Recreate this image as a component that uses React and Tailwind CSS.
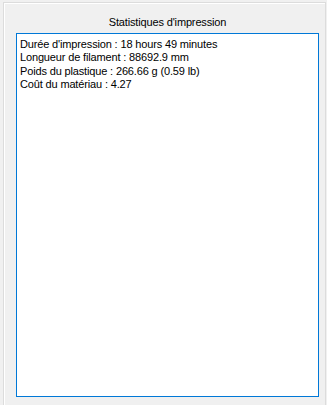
import React from "react";

const lines = [
  "Durée d'impression : 18 hours 49 minutes",
  "Longueur de filament : 88692.9 mm",
  "Poids du plastique : 266.66 g (0.59 lb)",
  "Coût du matériau : 4.27",
];

export default function App() {
  return (
    <div
      className="w-[327px] h-[405px] bg-[#f0f0f0] pt-[2px] pl-[3px] overflow-hidden"
      style={{ fontFamily: '"Liberation Sans", Arial, sans-serif' }}
    >
      <div className="h-[403px] w-[323px] border-l border-t border-r border-[#dcdcdc] shadow-[inset_1px_1px_0_#ffffff] pl-[12px] pr-[6px]">
        <div className="h-[30px] w-[303px] flex items-end justify-center pb-[3px] text-[11px] tracking-[-0.15px] text-black">
          Statistiques d'impression
        </div>
        <div className="w-[303px] h-[364px] bg-white border border-[#0078d7] px-[3px] pt-[4px] text-[11px] tracking-[-0.15px] leading-[13.4px] text-black">
          {lines.map((l) => (
            <div key={l}>{l}</div>
          ))}
        </div>
      </div>
    </div>
  );
}
